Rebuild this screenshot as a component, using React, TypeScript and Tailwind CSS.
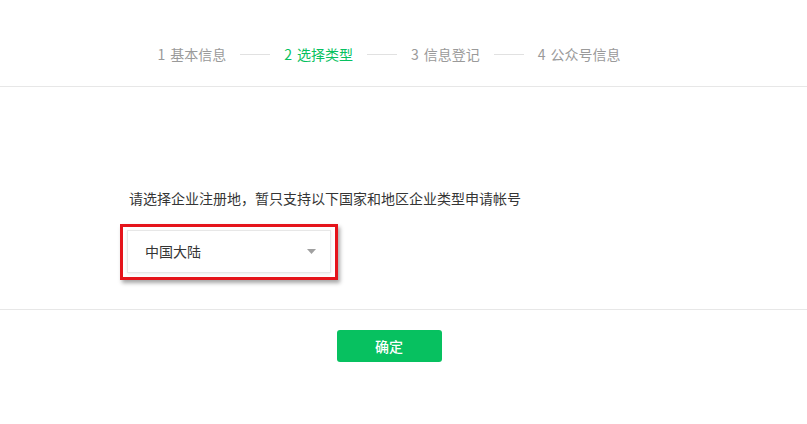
import React from 'react';

const steps = [
  { num: 1, label: '基本信息' },
  { num: 2, label: '选择类型' },
  { num: 3, label: '信息登记' },
  { num: 4, label: '公众号信息' },
];

const font = { fontFamily: '"Noto Sans CJK SC", "Noto Sans", sans-serif' };

export default function App() {
  const current = 2;

  return (
    <div className="min-h-[424px] bg-white text-[14px] text-[#353535]" style={font}>
      <div className="border-b border-[#e7e7e7] pt-[44px] pb-[22px]">
        <div className="flex items-center justify-center pr-[29px] leading-[20px]">
          {steps.map((step, index) => (
            <React.Fragment key={step.num}>
              {index > 0 && <span className="mx-[14px] h-px w-[30px] bg-[#e1e1e1]" />}
              <span className={step.num === current ? 'text-[#07c160]' : 'text-[#9a9a9a]'}>
                <span className="mr-[5px]">{step.num}</span>
                {step.label}
              </span>
            </React.Fragment>
          ))}
        </div>
      </div>

      <div className="border-b border-[#e7e7e7] pr-[29px] pt-[101px] pb-[29px]">
        <div className="mx-auto w-[538px]">
          <p className="ml-[9px] leading-[20px]">请选择企业注册地，暂只支持以下国家和地区企业类型申请帐号</p>
          <div className="mt-[16px] w-[218px] border-[3px] border-[#e5141b] px-[4px] pt-[3px] pb-[4px] shadow-[2px_3px_4px_rgba(0,0,0,0.35)]">
            <div className="flex h-[43px] items-center justify-between border border-[#e7e7e7] pl-[17px] pr-[14px] shadow-[0_1px_3px_rgba(0,0,0,0.08)]">
              <span>中国大陆</span>
              <svg width="9" height="5" viewBox="0 0 9 5">
                <path d="M0 0 L9 0 L4.5 5 Z" fill="#a0a0a0" />
              </svg>
            </div>
          </div>
        </div>
      </div>

      <div className="flex justify-center pr-[29px] pt-[20px]">
        <button className="h-[32px] w-[105px] rounded-[3px] bg-[#07c160] text-[14px] font-medium text-white">
          确定
        </button>
      </div>
    </div>
  );
}
